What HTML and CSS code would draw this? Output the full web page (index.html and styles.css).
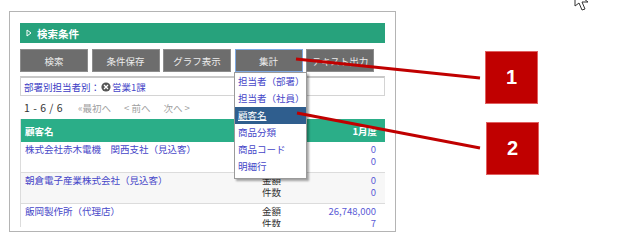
FILE: index.html
```html
<!DOCTYPE html>
<html>
<head>
<link rel="stylesheet" href="styles.css">
</head>
<body>
<div class="page">
    <div class="shot">
        <div class="viewport">
            <div class="panel-head">
                <svg class="tri" width="6" height="8" viewBox="0 0 6 8"><polygon points="1,1 5,4 1,7" fill="none" stroke="#fff" stroke-width="1"/></svg>
                検索条件
            </div>

            <div class="toolbar">
                <button class="btn">検索</button>
                <button class="btn">条件保存</button>
                <button class="btn">グラフ表示</button>
                <button class="btn btn-active">集計</button>
                <button class="btn">テキスト出力</button>
            </div>

            <div class="filter">
                部署別担当者別：<svg class="clear" width="10" height="10" viewBox="0 0 10 10"><circle cx="5" cy="5" r="4.6" fill="#555"/><path d="M3,3 L7,7 M7,3 L3,7" stroke="#fff" stroke-width="1.3"/></svg><span class="link">営業1課</span>
            </div>

            <div class="pager">
                <span class="count">1 - 6 / 6</span>
                <span class="nav first">«最初へ</span>
                <span class="nav">&lt; 前へ</span>
                <span class="nav">次へ &gt;</span>
            </div>

            <table class="report">
                <tr>
                    <th class="col-name" colspan="2">顧客名</th>
                    <th class="col-val">1月度</th>
                </tr>
                <tr>
                    <td class="col-name link">株式会社赤木電機　関西支社（見込客）</td>
                    <td class="col-label">金額<br>件数</td>
                    <td class="col-val">0<br>0</td>
                </tr>
                <tr class="alt">
                    <td class="col-name link">朝倉電子産業株式会社（見込客）</td>
                    <td class="col-label">金額<br>件数</td>
                    <td class="col-val">0<br>0</td>
                </tr>
                <tr>
                    <td class="col-name link">飯岡製作所（代理店）</td>
                    <td class="col-label">金額<br>件数</td>
                    <td class="col-val">26,748,000<br>7</td>
                </tr>
            </table>

            <ul class="menu">
                <li>担当者（部署）</li>
                <li>担当者（社員）</li>
                <li class="selected">顧客名</li>
                <li>商品分類</li>
                <li>商品コード</li>
                <li>明細行</li>
            </ul>
        </div>
    </div>
</div>

<!-- callout lines -->
<svg class="pointers" width="640" height="241" viewBox="0 0 640 241">
    <line x1="296" y1="59" x2="480" y2="78" stroke="#c00000" stroke-width="3"/>
    <line x1="297" y1="113" x2="480" y2="148" stroke="#c00000" stroke-width="3"/>
</svg>
<div class="callout one">1</div>
<div class="callout two">2</div>

<svg class="cursor" width="20" height="14" viewBox="0 0 20 14">
    <polygon points="3,-8 3,6 7,3 10,10 13,9 10,2 16,2" fill="#fff" stroke="#333" stroke-width="1"/>
</svg>
</body>
</html>
```

FILE: styles.css
```css
body {
    margin: 0;
    width: 640px;
    height: 241px;
    overflow: hidden;
    background-color: #fff;
    font-family: "Noto Sans CJK JP", "Liberation Sans", sans-serif;
    font-size: 9.5px;
    color: #333;
    position: relative;
}

.page {
    padding: 11px 0 0 9px;
}

.shot {
    width: 365px;
    padding: 11px 10px 4px 10px;
    border: 1px solid #b4b4b4;
}

.viewport {
    position: relative;
    height: 204px;
    overflow: hidden;
}

.panel-head {
    height: 20px;
    display: flex;
    align-items: center;
    padding-left: 6px;
    background-color: #27a27c;
    color: #fff;
    font-size: 10.5px;
    font-weight: bold;
}

.tri {
    margin-right: 5px;
}

.toolbar {
    display: flex;
    gap: 3.5px;
    margin-top: 6px;
}

.btn {
    width: 68px;
    height: 23px;
    padding: 0;
    border: 1px solid #8c8c8c;
    background-color: #6d6d6d;
    color: #ececec;
    font-family: "Noto Sans CJK JP", sans-serif;
    font-size: 9.5px;
}

.btn-active {
    border-color: #7ea8e0;
}

.filter {
    height: 17px;
    margin-top: 4px;
    display: flex;
    align-items: center;
    padding-left: 3px;
    border: 1px solid #d4d4d4;
    border-top: 2px solid #c8c8c8;
    color: #3b3bc4;
}

.clear {
    margin: 0 1px 0 1px;
}

.link {
    color: #4646c8;
}

.pager {
    height: 23px;
    display: flex;
    align-items: center;
    padding-left: 4px;
}

.count {
    width: 54px;
    color: #333;
    font-size: 10.5px;
    word-spacing: 1px;
}

.nav {
    color: #a0a0a0;
    margin-right: 13px;
}

.report {
    width: 100%;
    border-collapse: collapse;
    border-left: 1px solid #dcdcdc;
}

.report th {
    height: 23px;
    padding: 0 4px;
    background-color: #2bae88;
    color: #fff;
    font-weight: bold;
    text-align: left;
}

.report th.col-val {
    text-align: right;
    padding-right: 8px;
}

.report td {
    height: 28px;
    padding: 2px 4px 0 4px;
    vertical-align: top;
    line-height: 11.5px;
    border-bottom: 1px solid #dcdcdc;
}

.report tr.alt td {
    background-color: #f7f7f7;
}

.report td.col-label {
    width: 36px;
    color: #333;
}

.report td.col-val {
    width: 70px;
    text-align: right;
    padding-right: 9px;
    color: #5a5ad6;
}

.menu {
    position: absolute;
    left: 214px;
    top: 49px;
    width: 71px;
    margin: 0;
    padding: 0 0 3px 0;
    list-style: none;
    background-color: #fff;
    border: 1px solid #9a9a9a;
    box-shadow: 2px 2px 2px rgba(0, 0, 0, 0.35);
}

.menu li {
    height: 17px;
    line-height: 17px;
    padding-left: 3px;
    color: #4646c8;
}

.menu li.selected {
    background-color: #2f5e8e;
    color: #fff;
    text-decoration: underline;
}

.pointers {
    position: absolute;
    left: 0;
    top: 0;
    pointer-events: none;
}

.callout {
    position: absolute;
    width: 51px;
    height: 51px;
    display: flex;
    align-items: center;
    justify-content: center;
    background-color: #c00000;
    border: 1px solid #e06060;
    color: #fff;
    font-family: "Liberation Sans", sans-serif;
    font-size: 20px;
    font-weight: bold;
}

.callout.one {
    left: 485px;
    top: 51px;
}

.callout.two {
    left: 486px;
    top: 122px;
}

.cursor {
    position: absolute;
    left: 572px;
    top: 0;
}
```
